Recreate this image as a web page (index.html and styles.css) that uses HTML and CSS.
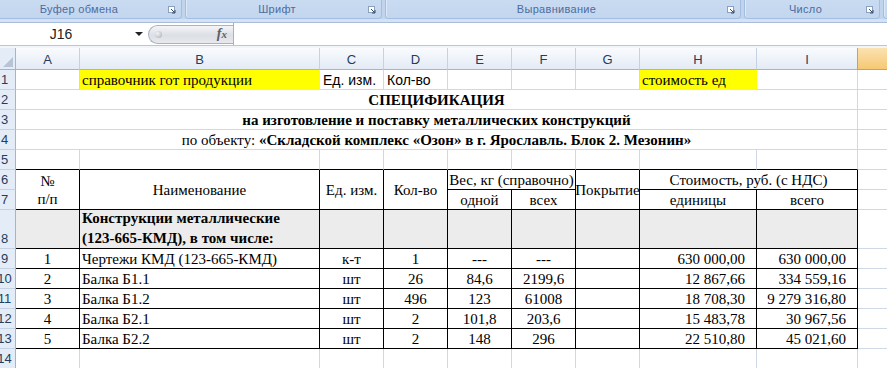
FILE: index.html
```html
<!DOCTYPE html>
<html lang="ru">
<head>
<title>Спецификация</title>
<meta charset="utf-8">
<link rel="stylesheet" href="styles.css">
</head>
<body>

<div class="ribbon">
  <div class="group g1"><span class="label">Буфер обмена</span><svg class="launcher" width="8" height="8" viewBox="0 0 8 8"><rect x="0.5" y="0.5" width="6" height="6" fill="#fff" stroke="#8aa0c0"/><path d="M3 3 L7 7 M4 7 H7 V4" stroke="#3b4d6b" fill="none"/></svg></div>
  <div class="group g2"><span class="label">Шрифт</span><svg class="launcher" width="8" height="8" viewBox="0 0 8 8"><rect x="0.5" y="0.5" width="6" height="6" fill="#fff" stroke="#8aa0c0"/><path d="M3 3 L7 7 M4 7 H7 V4" stroke="#3b4d6b" fill="none"/></svg></div>
  <div class="group g3"><span class="label">Выравнивание</span><svg class="launcher" width="8" height="8" viewBox="0 0 8 8"><rect x="0.5" y="0.5" width="6" height="6" fill="#fff" stroke="#8aa0c0"/><path d="M3 3 L7 7 M4 7 H7 V4" stroke="#3b4d6b" fill="none"/></svg></div>
  <div class="group g4"><span class="label">Число</span><svg class="launcher" width="8" height="8" viewBox="0 0 8 8"><rect x="0.5" y="0.5" width="6" height="6" fill="#fff" stroke="#8aa0c0"/><path d="M3 3 L7 7 M4 7 H7 V4" stroke="#3b4d6b" fill="none"/></svg></div>
  <div class="group g5"></div>
</div>
<div class="ribbon-edge"></div>

<div class="formula-bar">
  <div class="name-box"><span class="cell-ref">J16</span><span class="arrow"></span></div>
  <div class="fx-pill"><span class="dot"></span><span class="fx">f<small>x</small></span></div>
  <div class="formula-input"></div>
</div>
<div class="bar-gap"></div>

<div class="sheet">
  <div class="corner"><span class="tri"></span></div>
  <div class="ch">A</div><div class="ch">B</div><div class="ch">C</div><div class="ch">D</div><div class="ch">E</div>
  <div class="ch">F</div><div class="ch">G</div><div class="ch">H</div><div class="ch">I</div><div class="ch sel"></div>

  <div class="rh">1</div>
  <div class="c"></div>
  <div class="c yellow">справочник гот продукции</div>
  <div class="c sans">Ед. изм.</div>
  <div class="c sans">Кол-во</div>
  <div class="c"></div><div class="c"></div><div class="c"></div>
  <div class="c yellow">стоимость ед</div>
  <div class="c"></div><div class="c"></div>

  <div class="rh">2</div>
  <div class="c span9 center bold">СПЕЦИФИКАЦИЯ</div>
  <div class="c"></div>

  <div class="rh">3</div>
  <div class="c span9 center bold">на изготовление и поставку металлических конструкций</div>
  <div class="c"></div>

  <div class="rh">4</div>
  <div class="c span9 center"><span>по объекту: <b>«Складской комплекс «Озон» в г. Ярославль. Блок 2. Мезонин»</b></span></div>
  <div class="c"></div>

  <div class="rh">5</div>
  <div class="c above"></div><div class="c above"></div><div class="c above"></div><div class="c above"></div><div class="c above"></div>
  <div class="c above"></div><div class="c above"></div><div class="c above"></div><div class="c above"></div>
  <div class="c"></div>

  <div class="rh">6</div>
  <div class="c t rs2 center mid"><span>№<br>п/п</span></div>
  <div class="c t rs2 center mid">Наименование</div>
  <div class="c t rs2 center mid">Ед. изм.</div>
  <div class="c t rs2 center mid">Кол-во</div>
  <div class="c t cs2 center">Вес, кг (справочно)</div>
  <div class="c t rs2 center mid">Покрытие</div>
  <div class="c t cs2 center">Стоимость, руб. (с НДС)</div>
  <div class="c"></div>

  <div class="rh">7</div>
  <div class="c t center">одной</div>
  <div class="c t center">всех</div>
  <div class="c t center">единицы</div>
  <div class="c t center">всего</div>
  <div class="c"></div>

  <div class="rh">8</div>
  <div class="c t grey"></div>
  <div class="c t grey bold"><span>Конструкции металлические<br>(123-665-КМД), в том числе:</span></div>
  <div class="c t grey"></div><div class="c t grey"></div><div class="c t grey"></div><div class="c t grey"></div>
  <div class="c t grey"></div><div class="c t grey"></div><div class="c t grey"></div>
  <div class="c"></div>

  <div class="rh">9</div>
  <div class="c t center">1</div><div class="c t">Чертежи КМД (123-665-КМД)</div><div class="c t center">к-т</div>
  <div class="c t center">1</div><div class="c t center">---</div><div class="c t center">---</div><div class="c t"></div>
  <div class="c t num">630 000,00</div><div class="c t num">630 000,00</div>
  <div class="c"></div>

  <div class="rh">10</div>
  <div class="c t center">2</div><div class="c t">Балка Б1.1</div><div class="c t center">шт</div>
  <div class="c t center">26</div><div class="c t center">84,6</div><div class="c t center">2199,6</div><div class="c t"></div>
  <div class="c t num">12 867,66</div><div class="c t num">334 559,16</div>
  <div class="c"></div>

  <div class="rh">11</div>
  <div class="c t center">3</div><div class="c t">Балка Б1.2</div><div class="c t center">шт</div>
  <div class="c t center">496</div><div class="c t center">123</div><div class="c t center">61008</div><div class="c t"></div>
  <div class="c t num">18 708,30</div><div class="c t num">9 279 316,80</div>
  <div class="c"></div>

  <div class="rh">12</div>
  <div class="c t center">4</div><div class="c t">Балка Б2.1</div><div class="c t center">шт</div>
  <div class="c t center">2</div><div class="c t center">101,8</div><div class="c t center">203,6</div><div class="c t"></div>
  <div class="c t num">15 483,78</div><div class="c t num">30 967,56</div>
  <div class="c"></div>

  <div class="rh">13</div>
  <div class="c t center">5</div><div class="c t">Балка Б2.2</div><div class="c t center">шт</div>
  <div class="c t center">2</div><div class="c t center">148</div><div class="c t center">296</div><div class="c t"></div>
  <div class="c t num">22 510,80</div><div class="c t num">45 021,60</div>
  <div class="c"></div>

  <div class="rh">14</div>
  <div class="c"></div><div class="c"></div><div class="c"></div><div class="c"></div><div class="c"></div>
  <div class="c"></div><div class="c"></div><div class="c"></div><div class="c"></div><div class="c"></div>
</div>

</body>
</html>
```

FILE: styles.css
```css
* {
  box-sizing: border-box;
}

body {
  margin: 0;
  width: 887px;
  height: 368px;
  overflow: hidden;
  background: #fff;
  font-family: "Liberation Serif", "Times New Roman", serif;
}

/* Ribbon group captions */
.ribbon {
  display: flex;
  gap: 3px;
  height: 19px;
  background: #c0d4ec;
}

.group {
  display: flex;
  align-items: center;
  flex: none;
  height: 19px;
  padding-right: 5px;
  background: linear-gradient(#c9dbf1, #c2d6ef);
  border: 1px solid #a4bee2;
  border-top: none;
  border-radius: 0 0 4px 4px;
  box-shadow: inset 1px 0 0 #dde9f8;
  color: #4d6b9e;
  font: 11px "Liberation Sans", Arial, sans-serif;
}

.group .label {
  flex: 1;
  text-align: center;
  letter-spacing: 0.3px;
}

.launcher {
  flex: none;
  margin-top: 1px;
}

.g1 { width: 192px; border-left: none; margin-left: -10px; }
.g2 { width: 197px; }
.g3 { width: 356px; }
.g4 { width: 136px; }
.g5 { width: 20px; }

.ribbon-edge {
  height: 4px;
  background: #d4e2f4;
  border-bottom: 1px solid #a7bddb;
}

/* Name box and formula bar */
.formula-bar {
  display: flex;
  align-items: center;
  height: 23px;
  background: #fff;
  border-bottom: 1px solid #b9c7d9;
}

.name-box {
  display: flex;
  align-items: center;
  width: 148px;
  height: 100%;
  font: 14px "Liberation Sans", Arial, sans-serif;
  color: #222;
}

.cell-ref {
  width: 122px;
  text-align: center;
}

.arrow {
  width: 0;
  height: 0;
  margin-left: 13px;
  border-left: 4px solid transparent;
  border-right: 4px solid transparent;
  border-top: 4px solid #222;
}

.fx-pill {
  display: flex;
  align-items: center;
  width: 85px;
  height: 19px;
  padding: 0 6px 0 6px;
  background: linear-gradient(#f4f5f8, #dcdfe5 55%, #e7e9ee);
  border: 1px solid #a9b2c0;
  border-right: none;
  border-radius: 10px 0 0 10px;
}

.dot {
  width: 7px;
  height: 7px;
  border-radius: 50%;
  background: radial-gradient(circle at 35% 35%, #f3f3f3, #a8adb6);
}

.fx {
  margin-left: auto;
  font: italic bold 14px "Liberation Serif", serif;
  color: #5b5f66;
}

.fx small {
  font-size: 11px;
}

.formula-input {
  flex: 1;
  height: 100%;
  border-left: 1px solid #a9b2c0;
}

.bar-gap {
  height: 2px;
  background: #f1f4f9;
}

/* The worksheet */
.sheet {
  display: grid;
  grid-template-columns: 16px 64px 240px 64px 64px 64px 64px 64px 117px 101px 60px;
  grid-template-rows: 22px repeat(7, 20px) 39px repeat(6, 20px);
  font-size: 15px;
  line-height: 18px;
  color: #000;
}

.corner {
  position: relative;
  background: #e4ecf7;
  border-right: 1px solid #9eb6ce;
  border-bottom: 1px solid #9eb6ce;
}

.tri {
  position: absolute;
  right: 2px;
  bottom: 2px;
  border-left: 10px solid transparent;
  border-bottom: 10px solid #b7c4d6;
}

.ch {
  display: flex;
  align-items: center;
  justify-content: center;
  padding-top: 1px;
  background: linear-gradient(#f9fbfd, #e4ebf5);
  border-right: 1px solid #c5d2e3;
  border-bottom: 1px solid #9eb6ce;
  color: #243c5d;
  font: 13px "Liberation Sans", Arial, sans-serif;
}

.ch.sel {
  background: linear-gradient(#fbe2b1, #f6c873);
  border-left: 1px solid #f29536;
  border-bottom-color: #f29536;
  margin-left: -1px;
}

.rh {
  display: flex;
  align-items: flex-end;
  justify-content: center;
  padding: 0 6px 2px 0;
  background: #e4ecf7;
  border-right: 1px solid #9eb6ce;
  border-bottom: 1px solid #c5d2e3;
  color: #243c5d;
  font: 13px "Liberation Sans", Arial, sans-serif;
}

.c {
  display: flex;
  align-items: flex-end;
  padding: 0 2px;
  white-space: nowrap;
  border-right: 1px solid #d0d7e5;
  border-bottom: 1px solid #d0d7e5;
}

.center { justify-content: center; text-align: center; }
.mid { align-items: center; }
.bold { font-weight: bold; }

.num {
  justify-content: flex-end;
  padding-right: 11px;
}

.sans {
  font: 14px "Liberation Sans", Arial, sans-serif;
  padding-left: 3px;
  padding-bottom: 1px;
}

.span9 { grid-column: span 9; }
.cs2 { grid-column: span 2; }
.rs2 { grid-row: span 2; }

.yellow {
  background: #ffff00;
  border-color: #ffff00;
}

.above { border-bottom-color: #000; }

.t {
  border-right-color: #000;
  border-bottom-color: #000;
}

.grey { background: #ececec; }

.grey.bold {
  line-height: 20px;
  padding-bottom: 0;
}
```
